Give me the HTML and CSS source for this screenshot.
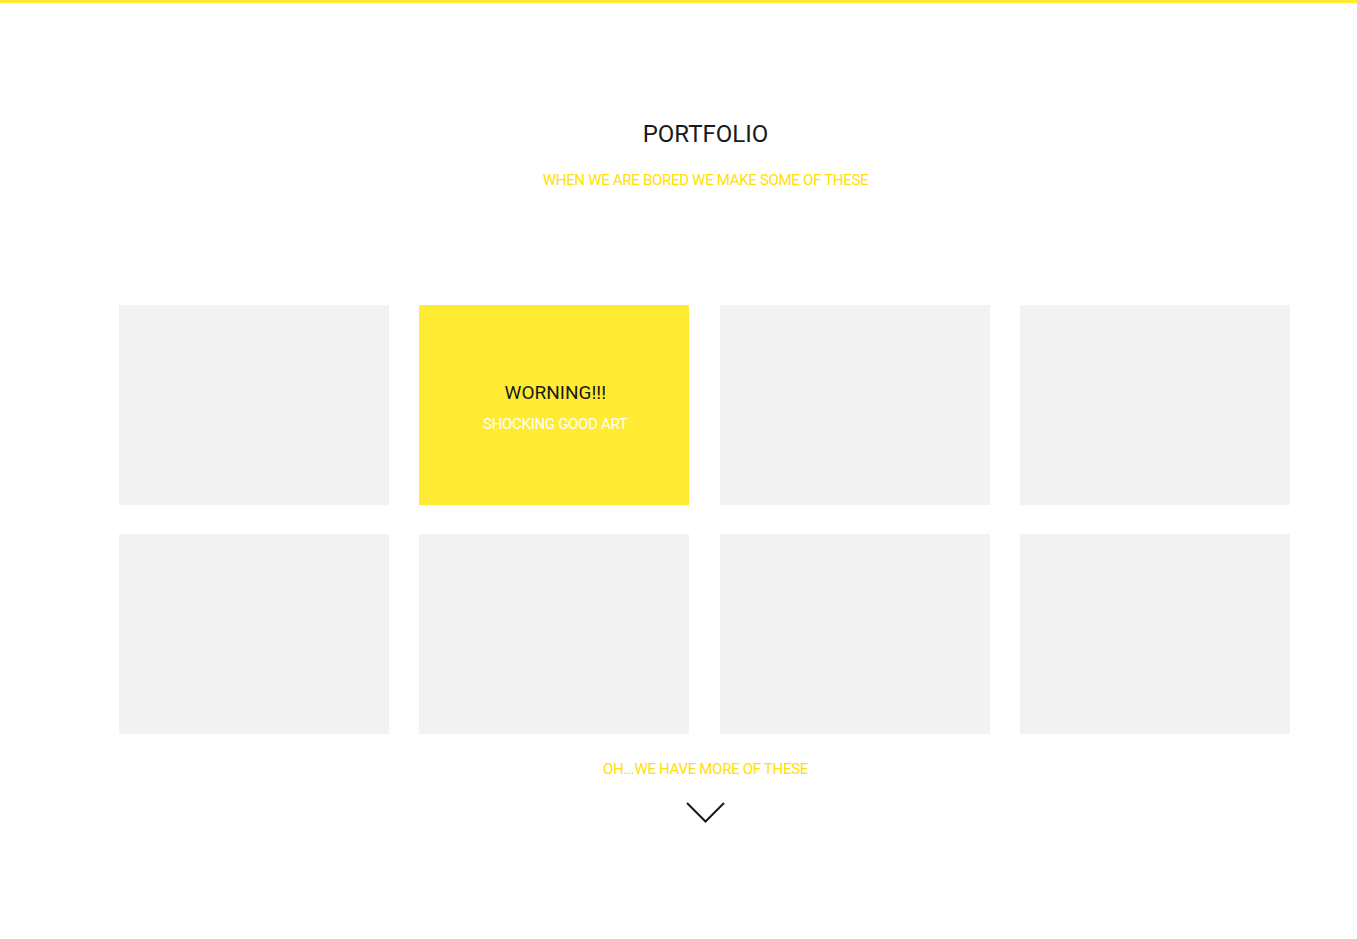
FILE: index.html
```html
<!DOCTYPE html>
<html>
<head>
<meta charset="utf-8">
<link rel="stylesheet" href="styles.css">
</head>
<body>
<div class="topbar"></div>
<section class="portfolio">
  <header class="head">
    <h1 class="title">PORTFOLIO</h1>
    <p class="subtitle">WHEN WE ARE BORED WE MAKE SOME OF THESE</p>
  </header>
  <div class="grid">
    <div class="tile"></div>
    <div class="tile tile-active">
      <h2 class="tile-title">WORNING!!!</h2>
      <p class="tile-sub">SHOCKING GOOD ART</p>
    </div>
    <div class="tile"></div>
    <div class="tile"></div>
    <div class="tile"></div>
    <div class="tile"></div>
    <div class="tile"></div>
    <div class="tile"></div>
  </div>
  <div class="more">
    <p class="more-text">OH...WE HAVE MORE OF THESE</p>
    <svg class="chevron" width="40" height="21" viewBox="0 0 40 21">
      <polyline points="1,1 19.5,19.5 38,1" fill="none" stroke="#1a1a1a" stroke-width="2"/>
    </svg>
  </div>
</section>
</body>
</html>
```
FILE: styles.css
```css
* { box-sizing: border-box; }
html, body { margin: 0; padding: 0; background: #fff; }
body { font-family: Roboto, "Liberation Sans", sans-serif; color: #1a1a1a; }
.topbar { height: 3px; background: #ffeb33; }
.portfolio { width: 1171px; margin-left: 119px; }
.head { text-align: center; padding-top: 117px; padding-left: 2px; }
.title { margin: 0; font-size: 24px; font-weight: 400; line-height: 28px; color: #1a1a1a; }
.subtitle { margin: 23px 0 0; font-size: 15px; line-height: 18px; color: #ffe000; letter-spacing: -0.3px; }
.grid { margin-top: 116px; display: grid; grid-template-columns: repeat(4, 270px); column-gap: 30.33px; row-gap: 29px; }
.tile { height: 200px; background: #f2f2f2; }
.tile-active { background: #ffeb33; display: flex; flex-direction: column; align-items: center; padding-top: 77px; padding-left: 2px; }
.tile-title { margin: 0; font-size: 19px; font-weight: 400; line-height: 22px; color: #1a1a1a; }
.tile-sub { margin: 11px 0 0; font-size: 15px; line-height: 18px; color: #fff; letter-spacing: -0.3px; }
.more { display: flex; flex-direction: column; align-items: center; padding-top: 26px; padding-left: 2px; }
.more-text { margin: 0; font-size: 15px; line-height: 18px; color: #ffe000; letter-spacing: -0.3px; }
.chevron { display: block; margin-top: 24px; }
```
